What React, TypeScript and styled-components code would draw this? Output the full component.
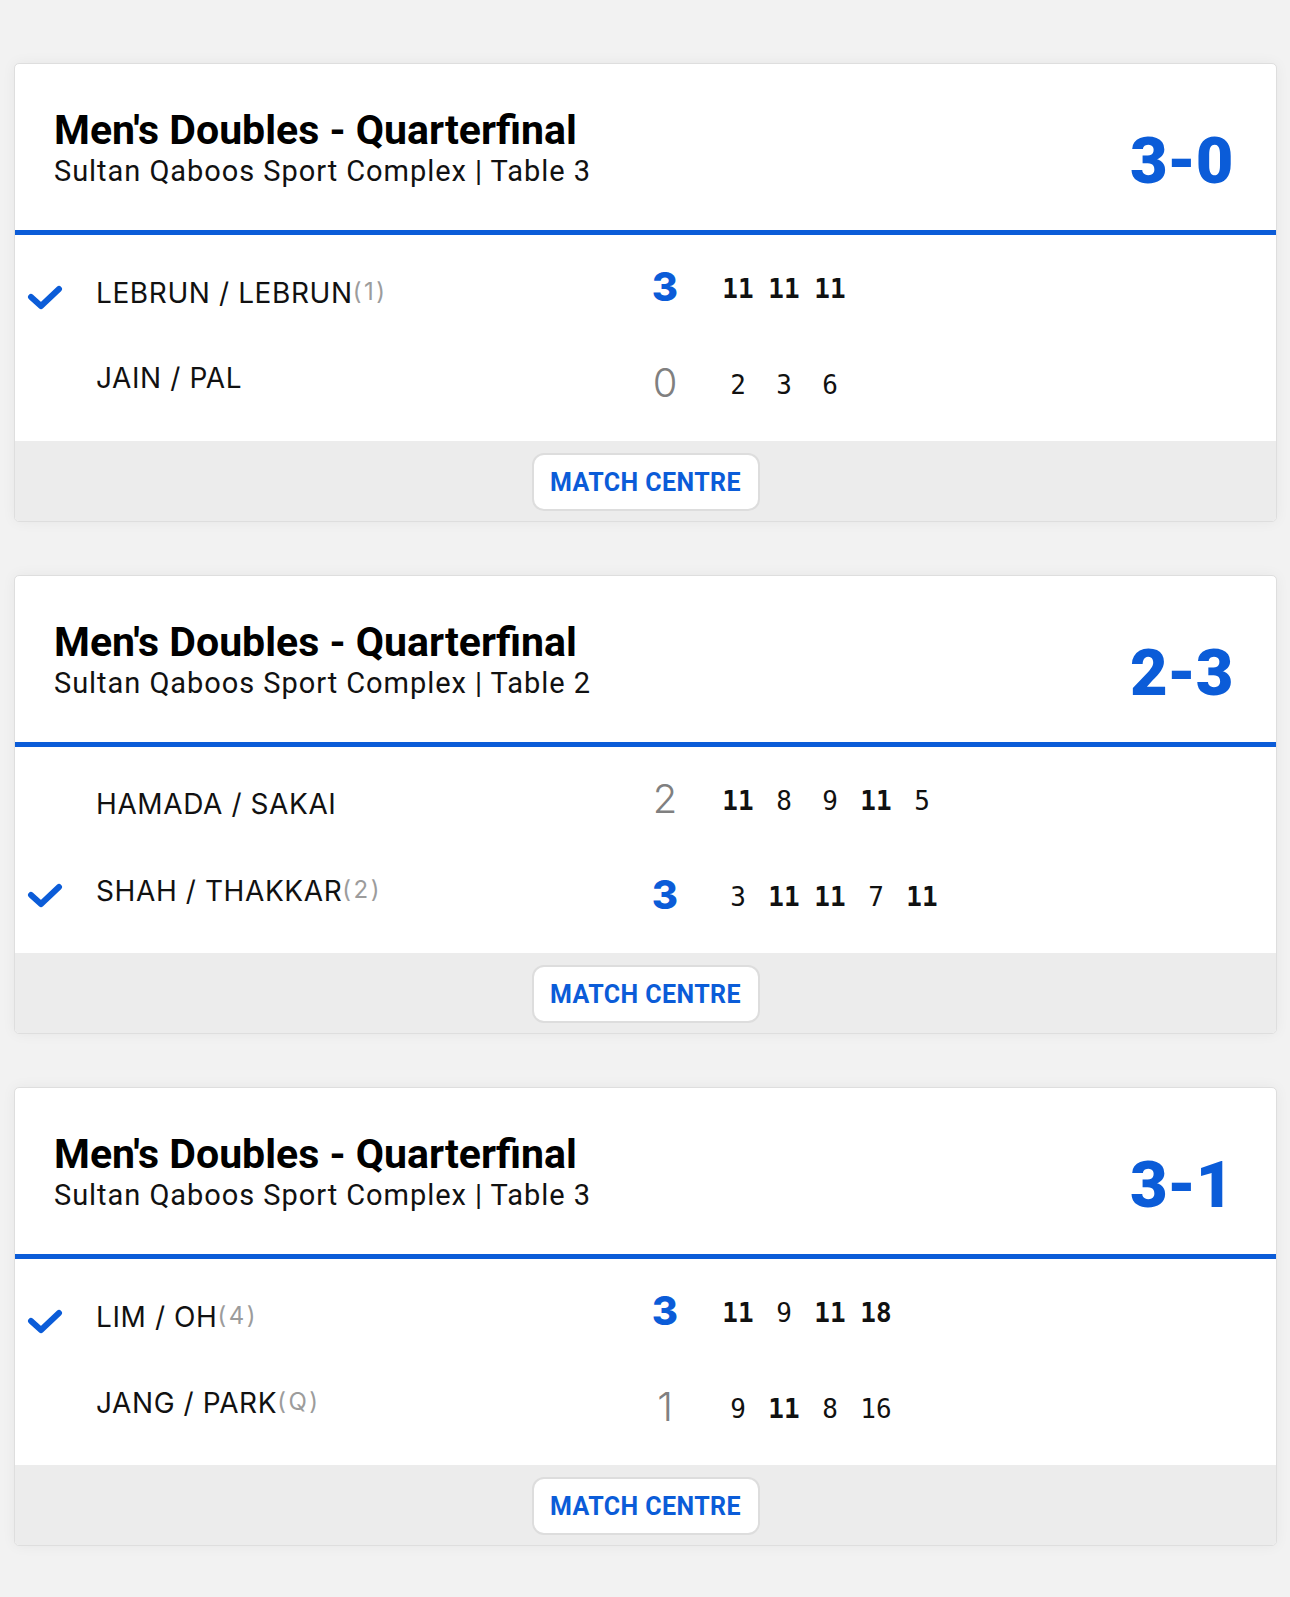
import styled, { createGlobalStyle } from "styled-components";

const BLUE = "#0b5cd8";

const GlobalStyle = createGlobalStyle`
  html, body {
    margin: 0;
    padding: 0;
    background: #f2f2f2;
  }
`;

type Team = {
  name: string;
  seed?: string;
  sets: number;
  won?: boolean;
  games: number[];
};

type Match = {
  title: string;
  venue: string;
  table: number;
  teams: [Team, Team];
};

const matches: Match[] = [
  {
    title: "Men's Doubles - Quarterfinal",
    venue: "Sultan Qaboos Sport Complex",
    table: 3,
    teams: [
      { name: "LEBRUN / LEBRUN", seed: "1", sets: 3, won: true, games: [11, 11, 11] },
      { name: "JAIN / PAL", sets: 0, games: [2, 3, 6] },
    ],
  },
  {
    title: "Men's Doubles - Quarterfinal",
    venue: "Sultan Qaboos Sport Complex",
    table: 2,
    teams: [
      { name: "HAMADA / SAKAI", sets: 2, games: [11, 8, 9, 11, 5] },
      { name: "SHAH / THAKKAR", seed: "2", sets: 3, won: true, games: [3, 11, 11, 7, 11] },
    ],
  },
  {
    title: "Men's Doubles - Quarterfinal",
    venue: "Sultan Qaboos Sport Complex",
    table: 3,
    teams: [
      { name: "LIM / OH", seed: "4", sets: 3, won: true, games: [11, 9, 11, 18] },
      { name: "JANG / PARK", seed: "Q", sets: 1, games: [9, 11, 8, 16] },
    ],
  },
];

const Page = styled.div`
  display: flex;
  flex-direction: column;
  gap: 53px;
  padding: 63px 13px 51px 14px;
  min-height: 100vh;
  box-sizing: border-box;
`;

const Card = styled.section`
  background: #fff;
  border: 1px solid #dedede;
  border-radius: 5px;
  overflow: hidden;
  box-shadow: 0 0 14px rgba(0, 0, 0, 0.05);
`;

const Header = styled.header`
  display: flex;
  align-items: flex-end;
  justify-content: space-between;
  padding: 42px 43px 41px 39px;
  border-bottom: 5px solid ${BLUE};
`;

const Titles = styled.div`
  display: flex;
  flex-direction: column;
`;

const Title = styled.h2`
  margin: 0;
  font-family: Roboto, "Liberation Sans", sans-serif;
  font-weight: 700;
  font-size: 41px;
  line-height: 48px;
  color: #000;
`;

const Venue = styled.div`
  font-family: Roboto, "Liberation Sans", sans-serif;
  font-size: 29px;
  line-height: 35px;
  letter-spacing: 0.95px;
  color: #111;
`;

const Result = styled.div`
  font-family: Roboto, Inter, sans-serif;
  font-weight: 900;
  font-size: 65px;
  line-height: 1;
  color: ${BLUE};
  margin-bottom: -5px;
  letter-spacing: -0.5px;
`;

const Body = styled.div`
  display: grid;
  grid-template-columns: 625px auto;
  align-items: start;
  height: 206px;
`;

const TeamList = styled.div`
  display: flex;
  flex-direction: column;
  padding-top: 14px;
`;

const TeamRow = styled.div`
  display: flex;
  align-items: center;
  height: 86px;
`;

const CheckCell = styled.div`
  display: flex;
  align-items: center;
  width: 81px;
  box-sizing: border-box;
  padding-left: 12px;
  padding-top: 9px;
`;

const Name = styled.div`
  font-family: Inter, "Liberation Sans", sans-serif;
  font-size: 28px;
  line-height: 34px;
  color: #111;
  letter-spacing: 0.6px;
  white-space: nowrap;
`;

const Seed = styled.span`
  font-size: 24px;
  color: #9c9c9c;
  letter-spacing: 2.5px;
  vertical-align: 3px;
`;

const ScoreList = styled.div`
  display: flex;
  flex-direction: column;
  padding-top: 4px;
`;

const ScoreRow = styled.div`
  display: flex;
  align-items: center;
  height: 96px;
`;

const Sets = styled.div<{ $won?: boolean }>`
  width: 50px;
  text-align: center;
  font-family: Inter, Roboto, sans-serif;
  font-size: 40px;
  line-height: 48px;
  font-weight: ${(p) => (p.$won ? 800 : 300)};
  color: ${(p) => (p.$won ? BLUE : "#808080")};
`;

const Games = styled.div`
  display: flex;
  margin-left: 25px;
  padding-top: 4px;
`;

const Game = styled.span<{ $won?: boolean }>`
  width: 46px;
  text-align: center;
  font-family: "DejaVu Sans Mono", "Liberation Mono", monospace;
  font-size: 26px;
  line-height: 32px;
  font-weight: ${(p) => (p.$won ? 700 : 400)};
  color: #111;
`;

const Footer = styled.footer`
  display: flex;
  justify-content: center;
  align-items: center;
  height: 80px;
  background: #ececec;
`;

const CentreButton = styled.button`
  width: 228px;
  height: 58px;
  margin-top: 2px;
  background: #fff;
  border: 2px solid #dddddd;
  border-radius: 12px;
  font-family: Roboto, "Liberation Sans", sans-serif;
  font-weight: 700;
  font-size: 25px;
  letter-spacing: 0.4px;
  color: ${BLUE};
  cursor: pointer;
`;

function Check() {
  return (
    <svg width="36" height="28" viewBox="0 0 36 28">
      <path
        d="M4 14 L14 23 L32 6"
        fill="none"
        stroke={BLUE}
        strokeWidth="6"
        strokeLinecap="round"
        strokeLinejoin="round"
      />
    </svg>
  );
}

function MatchCard({ match }: { match: Match }) {
  const [a, b] = match.teams;
  const result = `${a.sets}-${b.sets}`;

  return (
    <Card>
      <Header>
        <Titles>
          <Title>{match.title}</Title>
          <Venue>
            {match.venue} | Table {match.table}
          </Venue>
        </Titles>
        <Result>{result}</Result>
      </Header>

      <Body>
        <TeamList>
          {match.teams.map((team) => (
            <TeamRow key={team.name}>
              <CheckCell>{team.won && <Check />}</CheckCell>
              <Name>
                {team.name}
                {team.seed && <Seed>({team.seed})</Seed>}
              </Name>
            </TeamRow>
          ))}
        </TeamList>
        <ScoreList>
          {match.teams.map((team, i) => {
            const other = match.teams[1 - i];
            return (
              <ScoreRow key={team.name}>
                <Sets $won={team.won}>{team.sets}</Sets>
                <Games>
                  {team.games.map((g, j) => (
                    <Game key={j} $won={g > other.games[j]}>
                      {g}
                    </Game>
                  ))}
                </Games>
              </ScoreRow>
            );
          })}
        </ScoreList>
      </Body>

      <Footer>
        <CentreButton>MATCH CENTRE</CentreButton>
      </Footer>
    </Card>
  );
}

export default function App() {
  return (
    <>
      <GlobalStyle />
      <Page>
        {matches.map((m, i) => (
          <MatchCard key={i} match={m} />
        ))}
      </Page>
    </>
  );
}
